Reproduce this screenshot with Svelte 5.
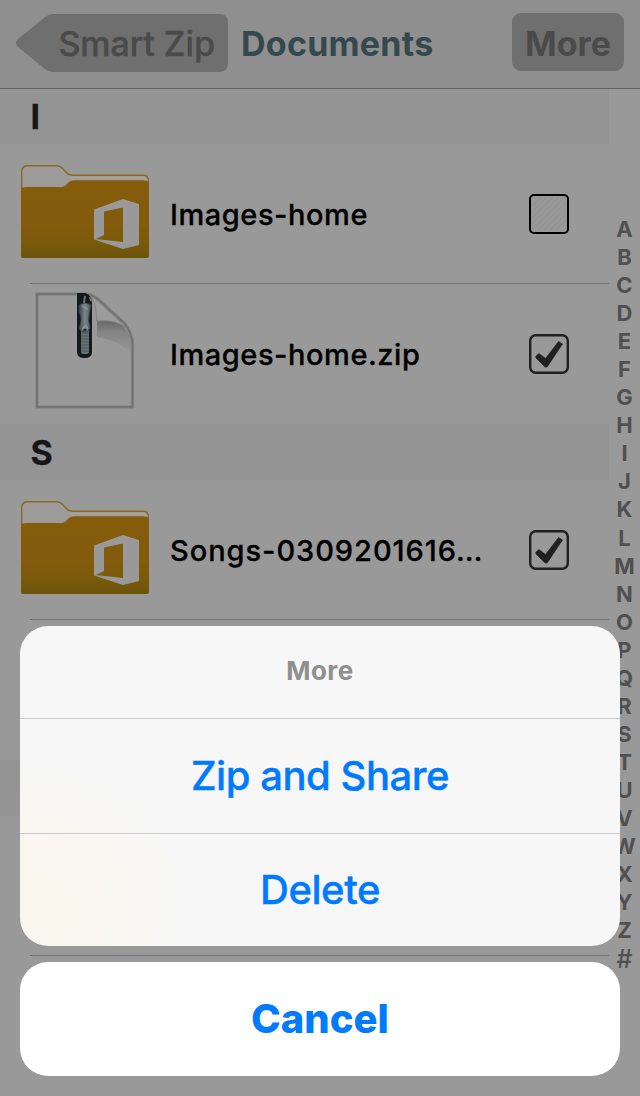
<script>
  const groups = [
    { letter: 'I', items: [
      { name: 'Images-home', kind: 'folder', checked: false },
      { name: 'Images-home.zip', kind: 'zip', checked: true }
    ] },
    { letter: 'S', items: [
      { name: 'Songs-0309201616…', kind: 'folder', checked: true, long: true }
    ] }
  ];
  const index = [...'ABCDEFGHIJKLMNOPQRSTUVWXYZ#'];
</script>

<main class="screen">
  <header class="bar">
    <button class="back">
      <svg class="back-shape" width="212" height="58" viewBox="0 0 212 58" aria-hidden="true">
        <path d="M37 0H203Q212 0 212 9V49Q212 58 203 58H37Q33 58 29 55L2 33Q-2 29 2 25L29 3Q33 0 37 0Z" fill="#6f6f6f" />
      </svg>
      <span>Smart Zip</span>
    </button>
    <h1><span>Documents</span></h1>
    <button class="more"><span>More</span></button>
  </header>

  <div class="content">
    <div class="list">
      {#each groups as group}
        <section>
          <h2>{group.letter}</h2>
          {#each group.items as item}
            <div class="row">
              <div class="icon">
                {#if item.kind === 'folder'}
                  <svg width="130" height="96" viewBox="0 0 130 96">
                    <defs>
                      <linearGradient id="gold" x1="0" y1="0" x2="0" y2="1">
                        <stop offset="0" stop-color="#865b0c" />
                        <stop offset=".6" stop-color="#825b0c" />
                        <stop offset=".85" stop-color="#78590b" />
                        <stop offset="1" stop-color="#6b530a" />
                      </linearGradient>
                    </defs>
                    <path d="M1.700 40V8Q2 3 7 2.700H36Q40 2.500 42 5L47 10Q49 12.300 53 12.300H123Q128 12.300 128.300 17V22" fill="#9c9b99" stroke="#8b6724" stroke-width="1.400" />
                    <path d="M50 15H124L127.500 19" fill="none" stroke="#aaa9a6" stroke-width="1.200" />
                    <path d="M1 27Q2 24 6 24H42Q45 24 47 21L49 19Q51 17.300 54 17.300H124Q127 17.300 129 19V93Q129 95 127 95H3Q1 95 1 93Z" fill="url(#gold)" />
                    <path fill-rule="evenodd" d="M74 46.500L103 36L119 41V82L103 86L74 76.500ZM84 48.500V72L76 76L103 79V44.500Z" fill="#999" />
                  </svg>
                {:else}
                  <svg width="102" height="120" viewBox="0 0 102 120">
                    <defs>
                      <linearGradient id="fold" x1=".35" y1="1" x2=".7" y2=".35">
                        <stop offset="0" stop-color="#989898" />
                        <stop offset="1" stop-color="#a0a0a0" />
                      </linearGradient>
                      <linearGradient id="shade" x1="0" y1="0" x2="0" y2="1">
                        <stop offset="0" stop-color="#686868" />
                        <stop offset=".35" stop-color="#848484" />
                        <stop offset="1" stop-color="#999" />
                      </linearGradient>
                      <linearGradient id="metal">
                        <stop offset="0" stop-color="#394349" />
                        <stop offset=".5" stop-color="#7c868b" />
                        <stop offset="1" stop-color="#465157" />
                      </linearGradient>
                    </defs>
                    <path d="M63 29H80Q91 32 97 48V64Q88 50 63 46Z" fill="url(#shade)" />
                    <path d="M3 3H52Q60 4 66 10L90 32Q98.500 42 98.500 54V116H3Z" fill="none" stroke="#868686" stroke-width="3.500" />
                    <path d="M3 3H52Q60 4 66 10L90 32Q98.500 42 98.500 54V116H3Z" fill="none" stroke="#6f6f6f" stroke-width="1.500" />
                    <path d="M58 5L94 38Q82 28 63 30Q63 17 58 5Z" fill="url(#fold)" stroke="#7c7c7c" stroke-width=".8" />
                    <path d="M43 2H51Q58 4 58 12V61Q58 67 50.500 67Q43 67 43 61Z" fill="#14191c" />
                    <rect x="47" y="34" width="8" height="29" rx="2" fill="#667074" />
                    <path d="M47 42H55M47 45H55M47 48H55M47 51H55M47 54H55M47 57H55M47 60H55" stroke="#4d575c" />
                    <path d="M45 14Q51 10 57 14L55 25Q54 29 56 36Q54 42 51 41Q46 41 45 37Q49 28 45 21Z" fill="url(#metal)" stroke="#394348" stroke-width=".8" />
                    <path d="M51 5L50 12M56 6L57 10" stroke="#68747a" stroke-width="2" />
                    <path d="M48 15L54 18M48 38L52 35L54 38" fill="none" stroke="#8a959a" stroke-width="1.500" />
                    <circle cx="51" cy="39" r="1.600" fill="#263238" />
                  </svg>
                {/if}
              </div>
              <span class="name" class:long={item.long}>{item.name}</span>
              <svg class="check" width="42" height="42" viewBox="0 0 42 42">
                {#if item.checked}
                  <rect x="2.200" y="2.200" width="37.600" height="37.600" rx="5.500" fill="none" stroke="#202020" stroke-width="2.400" />
                  <path d="M8.500 22.500L11 20.500L17.500 25.500L30.500 8.500L34.500 11L19.500 33.500Q18 35 16.500 33.500L8 25Q7 23.800 8.500 22.500Z" fill="#202020" stroke="#202020" stroke-width=".6" stroke-linejoin="round" />
                {:else}
                  <rect x="2" y="2" width="38" height="38" rx="4" fill="#989898" stroke="#000" stroke-width="2" />
                  <path d="M4 13L13 4M4 19L19 4M4 25L25 4M4 31L31 4M4 37L37 4M10 37L37 10M16 37L37 16M22 37L37 22M28 37L37 28" stroke="#8f8f8f" stroke-width=".8" />
                {/if}
              </svg>
            </div>
          {/each}
        </section>
      {/each}
      <div class="row"></div>
      <section>
        <h2></h2>
        <div class="row last"></div>
      </section>
    </div>
    <nav class="index">
      {#each index as letter}<span class:hash={letter === '#'}>{letter}</span>{/each}
    </nav>
  </div>

  <div class="sheet">
    <div class="actions">
      <div class="title"><span>More</span></div>
      <button><span class="share">Zip and Share</span></button>
      <button><span class="delete">Delete</span></button>
    </div>
    <button class="cancel"><span>Cancel</span></button>
  </div>
</main>

<style>
  :global(body) { margin: 0; background: #999; }
  .screen {
    position: relative; width: 640px; height: 1096px; overflow: hidden;
    background: #999; font-family: Inter, 'Liberation Sans', sans-serif; color: #000;
  }
  button { border: 0; padding: 0; margin: 0; background: none; font: inherit; color: inherit; }
  h1, h2 { margin: 0; }
  span { white-space: nowrap; }
  .bar {
    box-sizing: border-box; height: 89px; display: flex; align-items: flex-start;
    padding: 13px 16px 0; background: #8f8f8f; border-bottom: 1px solid #636363;
  }
  .back { display: grid; width: 212px; height: 58px; margin-top: 1px; flex: none; }
  .back > * { grid-area: 1 / 1; }
  .back span { justify-self: start; margin-left: 42.500px; line-height: 60px; font-size: 34px; font-weight: 500; letter-spacing: -.1px; color: #4a4a4a; -webkit-text-stroke: .4px #4a4a4a; }
  h1 { margin-left: 13px; width: 200px; font-size: 34px; line-height: 62px; font-weight: 700; letter-spacing: .25px; color: #34484d; }
  .more { margin-left: auto; width: 112px; height: 58px; border-radius: 9px; background: #6f6f6f; color: #4a4a4a; font-size: 34px; line-height: 62px; font-weight: 700; letter-spacing: .1px; }
  .content { display: flex; }
  .list { width: 609px; flex: none; }
  h2 { box-sizing: border-box; height: 56px; padding-left: 30.500px; background: #949494; color: #161616; font-size: 34px; font-weight: 700; line-height: 58px; -webkit-text-stroke: .3px #161616; }
  section:first-child h2 { height: 55px; line-height: 56px; }
  .row { position: relative; box-sizing: border-box; height: 140px; display: flex; align-items: center; padding-left: 20px; }
  .row:not(:last-child)::after, .row.last::after { content: ''; position: absolute; left: 30px; right: 0; bottom: 0; height: 1px; background: #737373; }
  section:nth-child(2) .row::after { content: ''; position: absolute; left: 30px; right: 0; bottom: 0; height: 1px; background: #737373; }
  .icon { box-sizing: border-box; width: 130px; height: 140px; padding-bottom: 6px; display: grid; place-items: center; }
  .icon svg { display: block; }
  .name { margin-left: 20px; width: 358px; flex: none; font-size: 29px; line-height: 42px; font-weight: 500; letter-spacing: .55px; padding-top: 2px; -webkit-text-stroke: .3px #000; }
  .name.long { letter-spacing: .95px; }
  .check { flex: none; }
  .index { width: 31px; padding-top: 126px; display: flex; flex-direction: column; align-items: center; }
  .index span { height: 28.050px; line-height: 28px; font-size: 22px; font-weight: 700; color: #505050; }
  .index .hash { font-size: 25px; font-weight: 500; line-height: 30px; }
  .sheet { position: absolute; left: 20px; right: 20px; bottom: 20px; display: flex; flex-direction: column; gap: 16px; color: #007aff; font-size: 40px; font-weight: 500; text-align: center; }
  .actions { height: 320px; display: flex; flex-direction: column; overflow: hidden; border-radius: 28px; background: radial-gradient(circle at 20px 285px, #f9f6ec 0, #f8f6ef 65px, #f7f7f7 145px); }
  .title { box-sizing: border-box; height: 92px; line-height: 90px; color: #8f8f8f; font-size: 26px; font-weight: 700; letter-spacing: .5px; }
  .actions button { box-sizing: border-box; height: 115px; border-top: 1px solid #cbcbcd; line-height: 114px; }
  .share, .delete { letter-spacing: -.45px; -webkit-text-stroke: .4px #007aff; }
  .actions button:last-child { height: 113px; line-height: 112px; }
  .cancel { height: 114px; border-radius: 28px; background: #fff; font-weight: 760; line-height: 114px; }
</style>
